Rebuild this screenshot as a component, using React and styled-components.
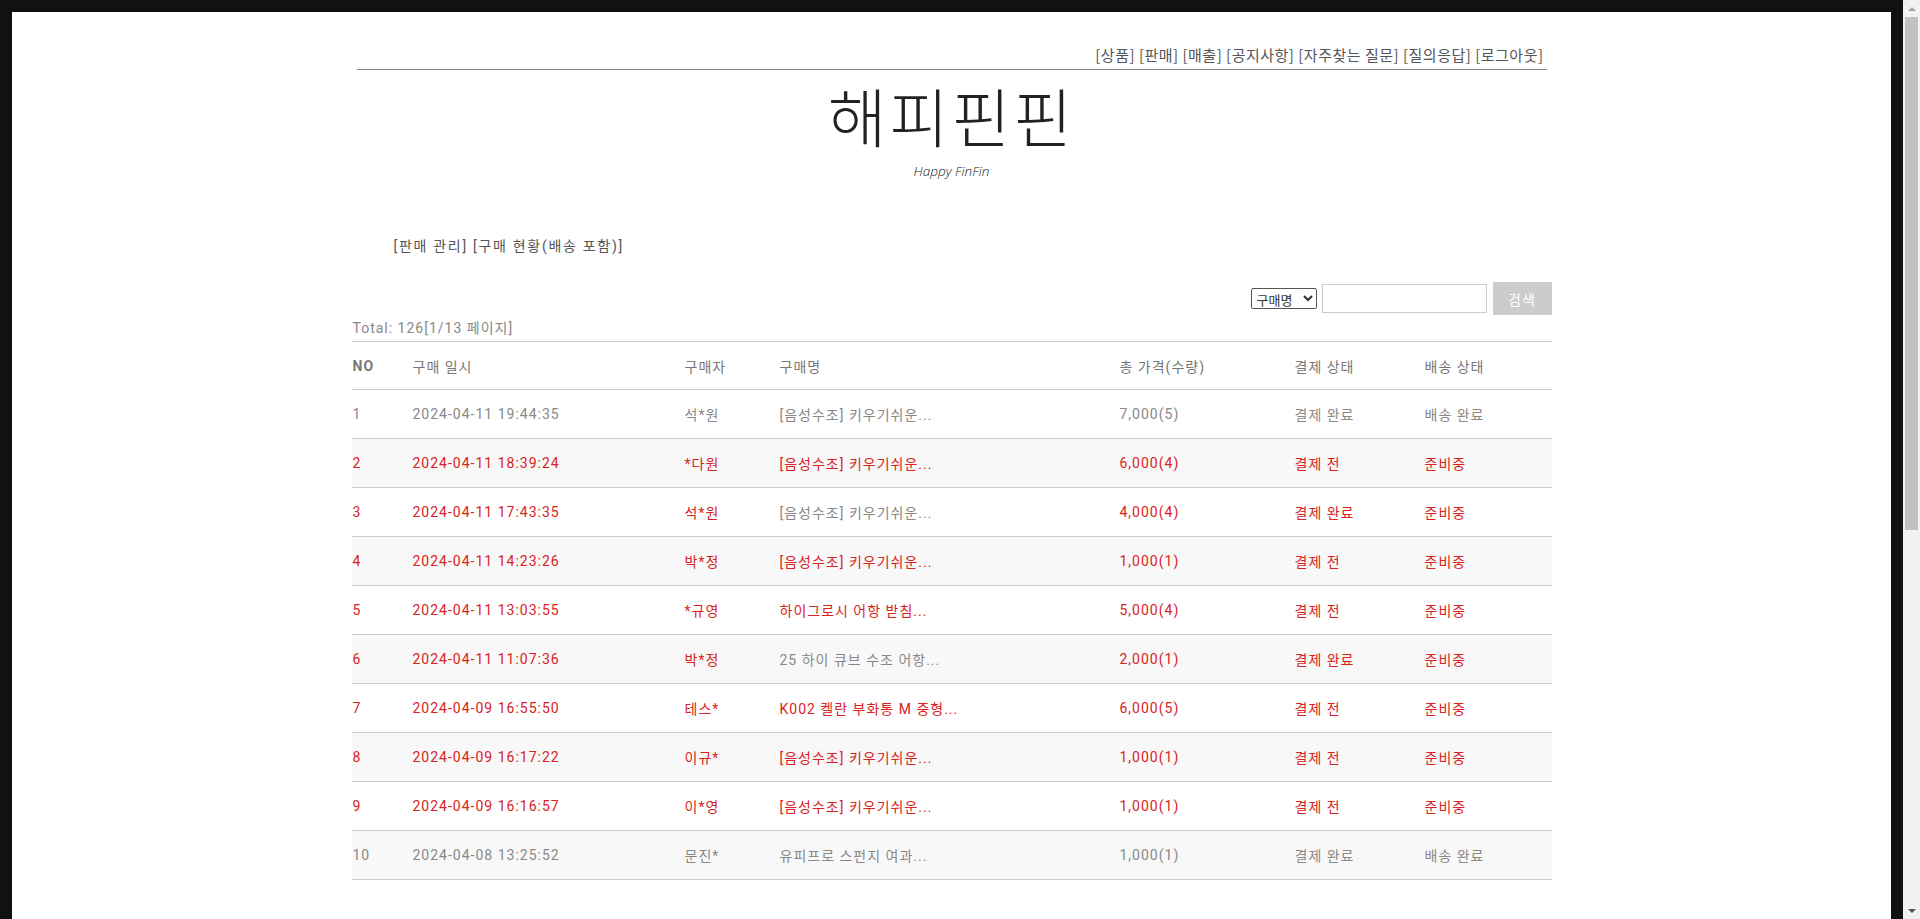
import styled, { createGlobalStyle } from "styled-components";

const Global = createGlobalStyle`
  html, body {
    margin: 0;
    padding: 0;
    background: #111;
    overflow: hidden;
  }
  * { box-sizing: border-box; }
`;

const orders = [
    { no: 1, date: "2024-04-11 19:44:35", buyer: "석*원", item: "[음성수조] 키우기쉬운...", price: "7,000(5)", pay: "결제 완료", ship: "배송 완료" },
    { no: 2, date: "2024-04-11 18:39:24", buyer: "*다원", item: "[음성수조] 키우기쉬운...", price: "6,000(4)", pay: "결제 전", ship: "준비중" },
    { no: 3, date: "2024-04-11 17:43:35", buyer: "석*원", item: "[음성수조] 키우기쉬운...", price: "4,000(4)", pay: "결제 완료", ship: "준비중" },
    { no: 4, date: "2024-04-11 14:23:26", buyer: "박*정", item: "[음성수조] 키우기쉬운...", price: "1,000(1)", pay: "결제 전", ship: "준비중" },
    { no: 5, date: "2024-04-11 13:03:55", buyer: "*규영", item: "하이그로시 어항 받침...", price: "5,000(4)", pay: "결제 전", ship: "준비중" },
    { no: 6, date: "2024-04-11 11:07:36", buyer: "박*정", item: "25 하이 큐브 수조 어항...", price: "2,000(1)", pay: "결제 완료", ship: "준비중" },
    { no: 7, date: "2024-04-09 16:55:50", buyer: "테스*", item: "K002 켈란 부화통 M 중형...", price: "6,000(5)", pay: "결제 전", ship: "준비중" },
    { no: 8, date: "2024-04-09 16:17:22", buyer: "이규*", item: "[음성수조] 키우기쉬운...", price: "1,000(1)", pay: "결제 전", ship: "준비중" },
    { no: 9, date: "2024-04-09 16:16:57", buyer: "이*영", item: "[음성수조] 키우기쉬운...", price: "1,000(1)", pay: "결제 전", ship: "준비중" },
    { no: 10, date: "2024-04-08 13:25:52", buyer: "문진*", item: "유피프로 스펀지 여과...", price: "1,000(1)", pay: "결제 완료", ship: "배송 완료" },
];

const columns = [
    { label: "NO", width: 60 },
    { label: "구매 일시", width: 272 },
    { label: "구매자", width: 95 },
    { label: "구매명", width: 340 },
    { label: "총 가격(수량)", width: 175 },
    { label: "결제 상태", width: 130 },
    { label: "배송 상태", width: 128 },
];

const RED = "#d92222";
const GRAY = "#888";

export default function App() {
    return (
        <>
            <Global />
            <Frame>
                <Page>
                    <Header>
                        <TopNav>
                            [상품] [판매] [매출] [공지사항] [자주찾는 질문] [질의응답] [로그아웃]
                        </TopNav>
                        <Title>해피핀핀</Title>
                        <Subtitle>Happy FinFin</Subtitle>
                    </Header>

                    <Main>
                        <SubNav>[판매 관리] [구매 현황(배송 포함)]</SubNav>

                        <SearchRow>
                            <Select defaultValue="name">
                                <option value="name">구매명</option>
                                <option value="buyer">구매자</option>
                            </Select>
                            <SearchInput type="text" />
                            <SearchButton>검색</SearchButton>
                        </SearchRow>

                        <Total>Total: 126[1/13 페이지]</Total>

                        <Table>
                            <colgroup>
                                {columns.map((c) => (
                                    <col key={c.label} style={{ width: c.width }} />
                                ))}
                            </colgroup>
                            <thead>
                                <tr>
                                    {columns.map((c) => (
                                        <Th key={c.label} $bold={c.label === "NO"}>{c.label}</Th>
                                    ))}
                                </tr>
                            </thead>
                            <tbody>
                                {orders.map((o) => {
                                    const done = o.ship === "배송 완료";
                                    const paid = o.pay === "결제 완료";
                                    const color = done ? GRAY : RED;
                                    return (
                                        <Row key={o.no} $striped={o.no % 2 === 0}>
                                            <Td $color={color}>{o.no}</Td>
                                            <Td $color={color}>{o.date}</Td>
                                            <Td $color={color}>{o.buyer}</Td>
                                            <Td $color={paid ? GRAY : RED}>{o.item}</Td>
                                            <Td $color={color}>{o.price}</Td>
                                            <Td $color={color}>{o.pay}</Td>
                                            <Td $color={color}>{o.ship}</Td>
                                        </Row>
                                    );
                                })}
                            </tbody>
                        </Table>
                    </Main>
                </Page>
                <Scrollbar>
                    <Arrow $up />
                    <Track>
                        <Thumb />
                    </Track>
                    <Arrow />
                </Scrollbar>
            </Frame>
        </>
    );
}

const Frame = styled.div`
    display: flex;
    height: 100vh;
    background: #111;
`;

const Page = styled.div`
    flex: 1;
    margin: 12px 12px 0 12px;
    background: #fff;
    overflow: hidden;
`;

const Header = styled.header`
    width: 1190px;
    margin: 33px auto 0;
    text-align: center;
`;

const TopNav = styled.nav`
    text-align: right;
    font-family: "Noto Sans CJK KR", sans-serif;
    font-size: 15px;
    line-height: 20px;
    letter-spacing: 0.5px;
    color: #555;
    padding: 0 3px 4px 0;
    border-bottom: 1px solid #888;
`;

const Title = styled.h1`
    margin: 12px 0 0;
    font-family: "Noto Sans CJK KR", sans-serif;
    font-weight: 300;
    font-size: 64px;
    line-height: 64px;
    letter-spacing: 3px;
    color: #222;
`;

const Subtitle = styled.p`
    margin: 17px 0 0;
    font-family: "Open Sans", sans-serif;
    font-style: italic;
    font-weight: 300;
    font-size: 13.5px;
    line-height: 16px;
    color: #222;
`;

const Main = styled.main`
    width: 1200px;
    margin: 0 auto;
    font-family: Roboto, "Noto Sans CJK KR", sans-serif;
`;

const SubNav = styled.div`
    margin-top: 57px;
    padding-left: 42px;
    font-size: 14px;
    line-height: 20px;
    letter-spacing: 1.7px;
    color: #555;
`;

const SearchRow = styled.div`
    display: flex;
    justify-content: flex-end;
    align-items: center;
    height: 33px;
    margin-top: 26px;
`;

const Select = styled.select`
    width: 66px;
    height: 21px;
    margin-right: 5px;
    padding: 0 0 0 1px;
    font-family: "Noto Sans CJK KR", sans-serif;
    font-size: 13px;
    color: #333;
    border: 1px solid #555;
    border-radius: 2px;
    background: #fff;
`;

const SearchInput = styled.input`
    width: 165px;
    height: 29px;
    border: 1px solid #ccc;
    outline: none;
    margin-right: 6px;
`;

const SearchButton = styled.button`
    width: 59px;
    height: 33px;
    border: 0;
    background: #ccc;
    color: #fff;
    font-family: "Noto Sans CJK KR", sans-serif;
    font-size: 14px;
    letter-spacing: 1px;
`;

const Total = styled.div`
    margin: 4px 0 4px;
    padding-left: 1px;
    font-size: 14px;
    line-height: 18px;
    letter-spacing: 1px;
    color: ${GRAY};
`;

const Table = styled.table`
    width: 1200px;
    table-layout: fixed;
    border-collapse: separate;
    border-spacing: 0;
    font-size: 14px;
    letter-spacing: 1px;
`;

const Th = styled.th`
    height: 49px;
    padding: 0 0 0 1px;
    text-align: left;
    font-weight: ${(p) => (p.$bold ? 700 : 400)};
    color: #777;
    border-top: 1px solid #ccc;
    border-bottom: 1px solid #ccc;
`;

const Row = styled.tr`
    background: ${(p) => (p.$striped ? "#f8f8f8" : "#fff")};
`;

const Td = styled.td`
    height: 49px;
    padding: 0 0 0 1px;
    color: ${(p) => p.$color};
    border-bottom: 1px solid #ccc;
    white-space: nowrap;
`;

const Scrollbar = styled.div`
    width: 17px;
    display: flex;
    flex-direction: column;
    background: #f1f1f1;
`;

const Arrow = styled.div`
    height: 17px;
    display: flex;
    align-items: center;
    justify-content: center;
    &::before {
        content: "";
        border-left: 4px solid transparent;
        border-right: 4px solid transparent;
        ${(p) =>
            p.$up
                ? "border-bottom: 4px solid #a3a3a3;"
                : "border-top: 4px solid #505050;"}
    }
`;

const Track = styled.div`
    flex: 1;
    padding: 0 2px;
`;

const Thumb = styled.div`
    height: 513px;
    background: #c1c1c1;
`;
